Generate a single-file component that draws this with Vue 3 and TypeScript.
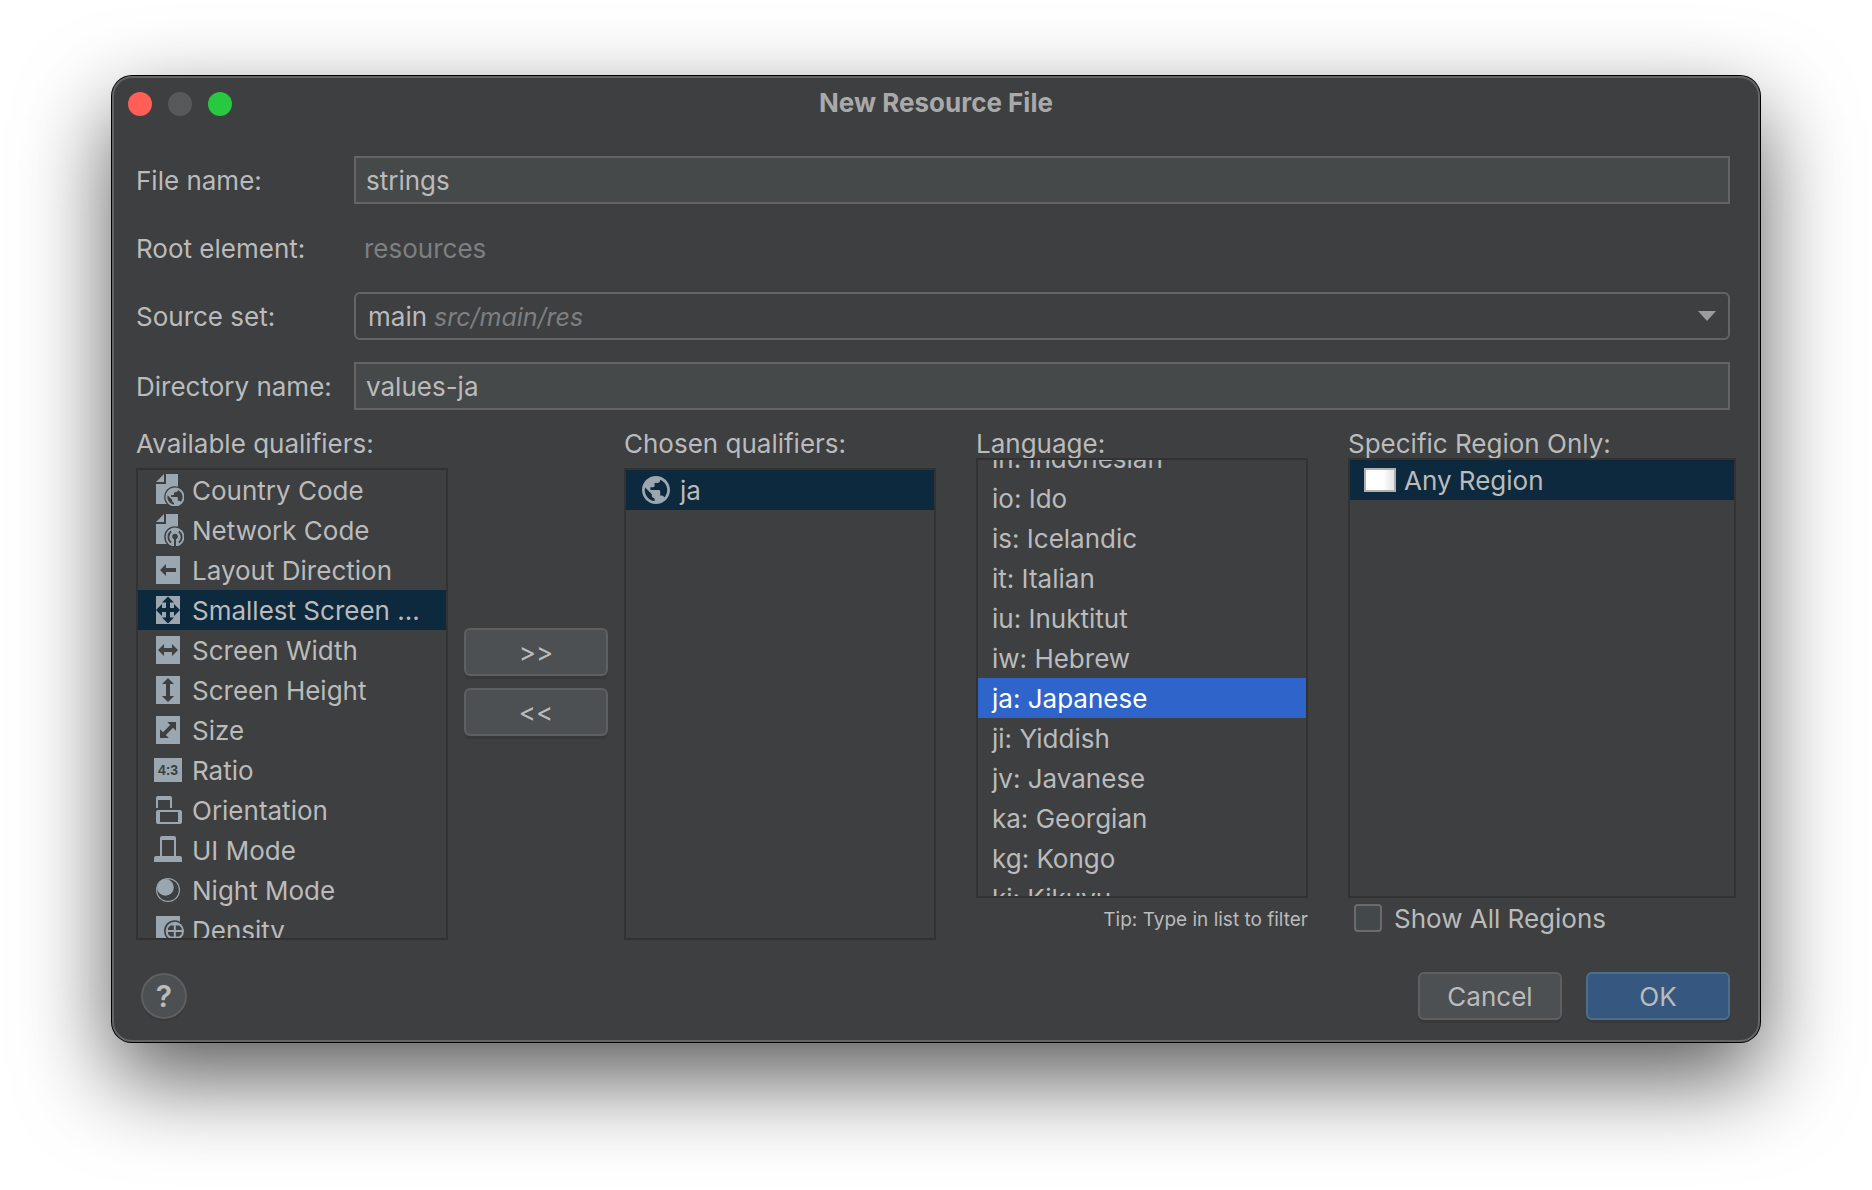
<script setup lang="ts">
import { onMounted, ref } from 'vue'

type IconName =
  | 'country' | 'network' | 'direction' | 'smallest' | 'width' | 'height'
  | 'size' | 'ratio' | 'orientation' | 'uimode' | 'night' | 'density'

interface Qualifier {
  icon: IconName
  label: string
}

const qualifiers: Qualifier[] = [
  { icon: 'country', label: 'Country Code' },
  { icon: 'network', label: 'Network Code' },
  { icon: 'direction', label: 'Layout Direction' },
  { icon: 'smallest', label: 'Smallest Screen ...' },
  { icon: 'width', label: 'Screen Width' },
  { icon: 'height', label: 'Screen Height' },
  { icon: 'size', label: 'Size' },
  { icon: 'ratio', label: 'Ratio' },
  { icon: 'orientation', label: 'Orientation' },
  { icon: 'uimode', label: 'UI Mode' },
  { icon: 'night', label: 'Night Mode' },
  { icon: 'density', label: 'Density' },
]

const languages: string[] = [
  'in: Indonesian',
  'io: Ido',
  'is: Icelandic',
  'it: Italian',
  'iu: Inuktitut',
  'iw: Hebrew',
  'ja: Japanese',
  'ji: Yiddish',
  'jv: Javanese',
  'ka: Georgian',
  'kg: Kongo',
  'ki: Kikuyu',
]

const globePath =
  'M12 2C6.48 2 2 6.48 2 12s4.48 10 10 10 10-4.48 10-10S17.52 2 12 2zm-1 17.93c-3.95-.49-7-3.85-7-7.93 0-.62.08-1.21.21-1.79L9 15v1c0 1.1.9 2 2 2v1.93zm6.9-2.54c-.26-.81-1-1.39-1.9-1.39h-1v-3c0-.55-.45-1-1-1H8v-2h2c.55 0 1-.45 1-1V7h2c1.1 0 2-.9 2-2v-.41c2.93 1.19 5 4.06 5 7.41 0 2.08-.8 3.97-2.1 5.39z'

const fileName = ref('strings')
const sourceSet = ref('main')
const directoryName = ref('values-ja')
const selectedQualifier = ref('Smallest Screen ...')
const selectedLanguage = ref('ja: Japanese')
const showAllRegions = ref(false)
const languageList = ref<HTMLElement | null>(null)

onMounted(() => {
  if (languageList.value) languageList.value.scrollTop = 22
})
</script>

<template>
  <div class="desktop">
    <main class="window">
      <header class="titlebar">
        <div class="lights">
          <button type="button" class="light close" aria-label="Close"></button>
          <button type="button" class="light minimize" aria-label="Minimize" disabled></button>
          <button type="button" class="light zoom" aria-label="Zoom"></button>
        </div>
        <h1>New Resource File</h1>
      </header>

      <form class="body" @submit.prevent>
        <div class="fields">
          <label class="text" for="file-name">File name:</label>
          <input id="file-name" v-model="fileName" class="field" type="text" />

          <span class="text">Root element:</span>
          <span class="text readonly">resources</span>

          <label class="text" for="source-set">Source set:</label>
          <div class="combo">
            <select id="source-set" v-model="sourceSet">
              <option value="main">main</option>
            </select>
            <span class="text hint">src/main/res</span>
            <svg class="arrow" viewBox="0 0 18 10" aria-hidden="true"><path d="M0 0H18L9 10z" /></svg>
          </div>
        </div>
        <div class="fields directory">
          <label class="text" for="directory-name">Directory name:</label>
          <input id="directory-name" v-model="directoryName" class="field" type="text" />
        </div>

        <div class="columns">
          <section class="column">
            <h2 id="available">Available qualifiers:</h2>
            <ul class="list inset" role="listbox" aria-labelledby="available">
              <li
                v-for="q in qualifiers"
                :key="q.label"
                role="option"
                class="row"
                :class="{ inactive: q.label === selectedQualifier }"
                :aria-selected="q.label === selectedQualifier"
                @click="selectedQualifier = q.label"
              >
                <svg class="icon" viewBox="0 0 16 16" aria-hidden="true">
                  <g v-if="q.icon === 'country' || q.icon === 'network'">
                    <path d="M6 0V4H2zM7 0H13V15H2V5H7z" />
                    <circle class="cut" cx="11.5" cy="11.5" r="5.4" />
                  </g>
                  <g v-if="q.icon === 'country'" transform="translate(5.8 5.8) scale(.475)">
                    <path :d="globePath" />
                  </g>
                  <template v-else-if="q.icon === 'network'">
                    <circle cx="11.5" cy="11.5" r="4.7" />
                    <g class="cut-line">
                      <path d="M9.6 14.2A3.3 3.3 0 0 1 9.6 8.8M13.4 14.2A3.3 3.3 0 0 0 13.4 8.8" />
                    </g>
                    <circle class="cut" cx="11.5" cy="11.3" r="1.4" />
                    <path class="cut" d="M11 11.5h1V16.4h-1z" />
                  </template>
                  <template v-else-if="q.icon === 'direction'">
                    <path d="M2 1H14V15H2z" />
                    <path class="cut" d="M4 8L7 5V7H12V9H7V11z" />
                  </template>
                  <template v-else-if="q.icon === 'smallest'">
                    <path d="M2 1H14V15H2z" />
                    <path
                      class="cut"
                      d="M8 1.2L11 4.2H9V7H11V5L14 8L11 11V9H9V11.8H11L8 14.8L5 11.8H7V9H5V11L2 8L5 5V7H7V4.2H5z"
                    />
                  </template>
                  <template v-else-if="q.icon === 'width'">
                    <path d="M2 1H14V15H2z" />
                    <path class="cut" d="M3 8L6 5V7H10V5L13 8L10 11V9H6V11z" />
                  </template>
                  <template v-else-if="q.icon === 'height'">
                    <path d="M2 1H14V15H2z" />
                    <path class="cut" d="M8 2L11 5H9V11H11L8 14L5 11H7V5H5z" />
                  </template>
                  <template v-else-if="q.icon === 'size'">
                    <path d="M2 1H14V15H2z" />
                    <path
                      class="cut"
                      d="M12 4V8.4L10.5 6.9L6.9 10.5L8.4 12H4V7.6L5.5 9.1L9.1 5.5L7.6 4z"
                    />
                  </template>
                  <template v-else-if="q.icon === 'ratio'">
                    <path d="M1 2H15V14H1z" />
                    <text class="ratio" x="8" y="10.5" text-anchor="middle">4:3</text>
                  </template>
                  <path
                    v-else-if="q.icon === 'orientation'"
                    fill-rule="evenodd"
                    d="M2 7V2Q2 1 3 1H9Q10 1 10 2V7H9V3H3V7zM3 8H14Q15 8 15 9V14Q15 15 14 15H3Q2 15 2 14V9Q2 8 3 8zM4 9V14H13V9z"
                  />
                  <path
                    v-else-if="q.icon === 'uimode'"
                    fill-rule="evenodd"
                    d="M4 11V2Q4 1 5 1H11Q12 1 12 2V11H14Q15 11 15 12V14H1V12Q1 11 2 11zM5 3V11H11V3z"
                  />
                  <template v-else-if="q.icon === 'night'">
                    <circle cx="8" cy="8" r="6" />
                    <circle class="cut" cx="8" cy="8" r="5.4" />
                    <circle cx="6.7" cy="6.7" r="4.2" />
                  </template>
                  <template v-else-if="q.icon === 'density'">
                    <path d="M2 1H14V15H2z" />
                    <circle class="cut" cx="11.4" cy="8.5" r="5.4" />
                    <circle cx="11.4" cy="8.5" r="4.6" />
                    <path
                      class="cut"
                      d="M9.2 5.8H10.9V8H8V7zM11.9 5.8H13.6L14.8 7V8H11.9zM8 9H10.9V11.2H9.2L8 10zM11.9 9H14.8V10L13.6 11.2H11.9z"
                    />
                  </template>
                </svg>
                <span class="text">{{ q.label }}</span>
              </li>
            </ul>
          </section>

          <div class="movers">
            <button type="button" class="button">&gt;&gt;</button>
            <button type="button" class="button">&lt;&lt;</button>
          </div>

          <section class="column">
            <h2 id="chosen">Chosen qualifiers:</h2>
            <ul class="list inset" role="listbox" aria-labelledby="chosen">
              <li class="row inactive" role="option" aria-selected="true">
                <svg class="icon" viewBox="0 0 16 16" aria-hidden="true">
                  <g transform="translate(-.4 -.4) scale(.7)"><path :d="globePath" /></g>
                </svg>
                <span class="text">ja</span>
              </li>
            </ul>
          </section>

          <section class="column language">
            <h2 id="language">Language:</h2>
            <ul ref="languageList" class="list" role="listbox" aria-labelledby="language">
              <li
                v-for="lang in languages"
                :key="lang"
                role="option"
                class="row"
                :class="{ active: lang === selectedLanguage }"
                :aria-selected="lang === selectedLanguage"
                @click="selectedLanguage = lang"
              >
                <span class="text">{{ lang }}</span>
              </li>
            </ul>
            <p class="under text tip">Tip: Type in list to filter</p>
          </section>

          <section class="column">
            <h2 id="region">Specific Region Only:</h2>
            <ul class="list" role="listbox" aria-labelledby="region">
              <li class="row inactive" role="option" aria-selected="true">
                <span class="flag"></span>
                <span class="text">Any Region</span>
              </li>
            </ul>
            <label class="under check" for="all-regions">
              <input id="all-regions" v-model="showAllRegions" type="checkbox" />
              <span class="text">Show All Regions</span>
            </label>
          </section>
        </div>

        <footer class="actions">
          <button type="button" class="help" aria-label="Help">?</button>
          <button type="button" class="button">Cancel</button>
          <button type="submit" class="button primary">OK</button>
        </footer>
      </form>
    </main>
  </div>
</template>

<style>
body {
  margin: 0;
  background: #ffffff;
}
</style>

<style scoped>
.desktop,
.desktop * {
  box-sizing: border-box;
}

.desktop {
  min-height: 100vh;
  padding: 76px 112px 148px;
  background: #ffffff;
  color: #bbbbbb;
  font-family: Inter, "Noto Sans", sans-serif;
  font-size: 26px;
  line-height: 34px;
  overflow: hidden;
}

.window {
  border: 2px solid #646566;
  border-radius: 20px;
  background: #3d3f41;
  box-shadow:
    0 0 0 1px #000000,
    0 36px 90px rgba(0, 0, 0, 0.65);
}

.titlebar {
  display: grid;
  grid-template-columns: 1fr auto 1fr;
  align-items: center;
  height: 52px;
  padding: 0 14px;
}

.lights {
  display: flex;
  gap: 16px;
}

.light {
  width: 24px;
  height: 24px;
  padding: 0;
  border: 0;
  border-radius: 50%;
}

.close {
  background: #ff5f57;
}

.minimize {
  background: #58595b;
}

.zoom {
  background: #28c840;
}

h1 {
  margin: 0;
  padding-bottom: 2px;
  color: #a9a9a9;
  font-size: 26px;
  font-weight: 700;
}

h2 {
  height: 32px;
  margin: 0;
  font-size: 26px;
  font-weight: 400;
  line-height: 36px;
  white-space: nowrap;
}

.text {
  padding-top: 2px;
}

.body {
  padding: 26px 22px 20px;
}

.fields {
  display: grid;
  grid-template-columns: 218px minmax(0, 1fr);
  row-gap: 20px;
  align-items: center;
  padding-right: 6px;
}

.directory {
  margin-top: 22px;
}

.field {
  width: 100%;
  height: 48px;
  padding: 0 10px;
  border: 2px solid #646464;
  border-radius: 0;
  outline: 0;
  background: #45494a;
  color: #bbbbbb;
  font: inherit;
}

.readonly {
  height: 48px;
  padding-left: 10px;
  color: #7d7f80;
  line-height: 46px;
}

.combo {
  display: grid;
  grid-template-columns: 80px 1fr auto;
  align-items: center;
}

.combo select {
  grid-area: 1 / 1 / 2 / 4;
  width: 100%;
  height: 48px;
  padding: 2px 12px 0;
  border: 2px solid #646566;
  border-radius: 6px;
  outline: 0;
  appearance: none;
  background: transparent;
  color: #bbbbbb;
  font: inherit;
}

.hint {
  grid-area: 1 / 2;
  color: #7d7f80;
  font-size: 25px;
  font-style: italic;
  pointer-events: none;
}

.arrow {
  grid-area: 1 / 3;
  width: 18px;
  height: 10px;
  margin-right: 14px;
  fill: #9a9c9e;
  pointer-events: none;
}

.columns {
  display: grid;
  grid-template-columns:
    minmax(0, 312fr) 176px minmax(0, 312fr) 40px minmax(0, 332fr) 40px
    minmax(0, 388fr);
  grid-template-rows: minmax(0, 1fr);
  height: 514px;
  margin-top: 16px;
}

.column {
  display: flex;
  flex-direction: column;
  min-height: 0;
}

.language {
  grid-column: 5;
}

.language + .column {
  grid-column: 7;
}

.list {
  flex: 1;
  min-height: 0;
  margin: 0;
  padding: 0;
  border: 2px solid #323232;
  overflow: hidden;
  list-style: none;
}

.inset {
  margin-top: 10px;
}

.row {
  --row-bg: #3d3f41;
  display: flex;
  align-items: center;
  gap: 8px;
  height: 40px;
  padding: 0 14px;
  background: var(--row-bg);
  white-space: nowrap;
}

.inactive {
  --row-bg: #0d293e;
}

.active {
  --row-bg: #2f65ca;
  color: #ffffff;
}

.icon {
  flex: none;
  width: 32px;
  height: 32px;
  fill: #9aa7b0;
}

.cut {
  fill: var(--row-bg);
}

.cut-line {
  fill: none;
  stroke: var(--row-bg);
  stroke-width: 0.9;
}

.ratio {
  fill: var(--row-bg);
  font-family: "Liberation Sans", sans-serif;
  font-size: 7px;
  font-weight: 700;
}

.movers {
  display: flex;
  flex-direction: column;
  gap: 12px;
  padding: 202px 16px 0;
}

.button {
  width: 144px;
  height: 48px;
  padding: 2px 0 0;
  border: 2px solid #5e6060;
  border-radius: 6px;
  background: #4c5052;
  box-shadow: 0 3px 0 #37393b;
  color: #bbbbbb;
  font: inherit;
}

.primary {
  border-color: #4c708c;
  background: #365880;
}

.under {
  height: 40px;
  margin: 0 0 2px;
}

.tip {
  font-size: 19px;
  line-height: 40px;
  text-align: right;
}

.flag {
  width: 32px;
  height: 24px;
  border: 2px solid #b0b0b0;
  background: linear-gradient(90deg, #ffffff 60%, #e4e4e4);
}

.check {
  display: flex;
  align-items: center;
  gap: 12px;
  padding-left: 6px;
}

.check input {
  width: 28px;
  height: 28px;
  margin: 0;
  border: 2px solid #6b6b6b;
  border-radius: 4px;
  appearance: none;
  background: #43494a;
}

.actions {
  display: flex;
  align-items: center;
  gap: 24px;
  margin-top: 32px;
  padding: 0 6px 0 5px;
}

.help {
  width: 46px;
  height: 46px;
  margin-right: auto;
  padding: 0;
  border: 2px solid #5e6060;
  border-radius: 50%;
  background: #4c5052;
  box-shadow: 0 2px 0 #37393b;
  color: #bbbbbb;
  font: inherit;
  font-size: 30px;
  font-weight: 600;
}
</style>
